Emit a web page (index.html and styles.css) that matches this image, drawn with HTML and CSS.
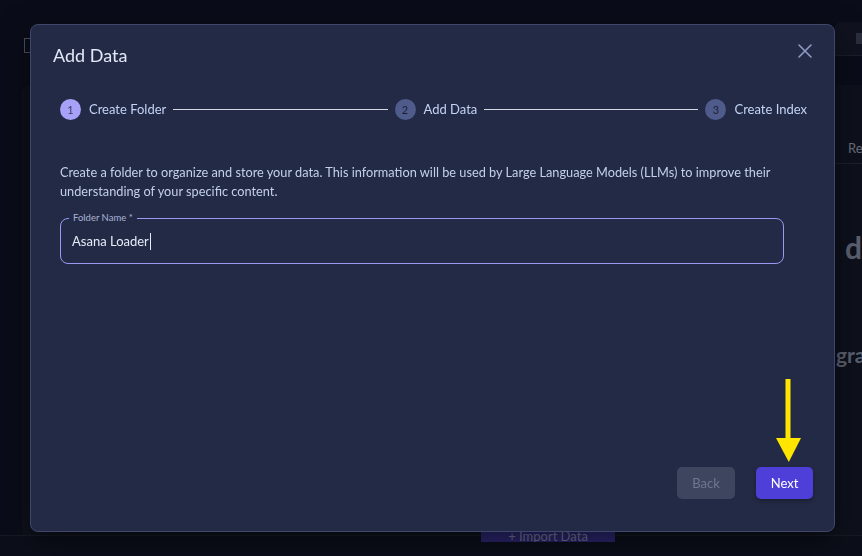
FILE: index.html
```html
<!DOCTYPE html>
<html lang="en">
<head>
    <meta charset="UTF-8">
    <meta name="viewport" content="width=device-width, initial-scale=1.0">
    <title>Add Data</title>
    <link rel="stylesheet" href="styles.css">
</head>
<body>
    <!-- Página por trás do modal (escurecida) -->
    <div class="page">
        <header class="topbar">
            <span class="topbar-icon"></span>
            <div class="topbar-right"><span class="topbar-chip"></span></div>
        </header>
        <main class="content">
            <div class="content-main"></div>
            <aside class="content-side">
                <div class="side-tab">Re</div>
                <div class="side-heading">d</div>
                <div class="side-sub">gra</div>
            </aside>
        </main>
        <footer class="page-footer">
            <button class="import-btn">+ Import Data</button>
        </footer>
    </div>

    <!-- Modal "Add Data" -->
    <div class="backdrop">
        <div class="modal">
            <h2 class="modal-title">Add Data</h2>
            <button class="modal-close" aria-label="Close">
                <svg width="14" height="14" viewBox="0 0 14 14">
                    <path d="M1 1 L13 13 M13 1 L1 13" stroke="#8f9ac6" stroke-width="1.6" stroke-linecap="round"/>
                </svg>
            </button>

            <!-- Etapas -->
            <div class="stepper">
                <span class="step-num active">1</span>
                <span class="step-label">Create Folder</span>
                <span class="step-line"></span>
                <span class="step-num">2</span>
                <span class="step-label">Add Data</span>
                <span class="step-line"></span>
                <span class="step-num">3</span>
                <span class="step-label">Create Index</span>
            </div>

            <div class="modal-body">
                <p class="description">Create a folder to organize and store your data. This information will be used by Large Language Models (LLMs) to improve their understanding of your specific content.</p>

                <div class="field">
                    <span class="field-label">Folder Name *</span>
                    <div class="field-value">Asana Loader<span class="caret"></span></div>
                </div>
            </div>

            <div class="modal-actions">
                <button class="btn btn-back" disabled>Back</button>
                <button class="btn btn-next">Next</button>
            </div>

            <!-- Seta amarela de anotação -->
            <svg class="arrow" width="26" height="84" viewBox="0 0 26 84">
                <rect x="9.5" y="0" width="5" height="61" fill="#ffe500"/>
                <polygon points="0,59 25,59 12.8,83" fill="#ffe500"/>
            </svg>
        </div>
    </div>
</body>
</html>
```

FILE: styles.css
```css
/* Base */
body {
    margin: 0;
    font-family: Lato, "Noto Sans", sans-serif;
    background-color: #0a0d19;
    overflow: hidden;
}

/* Página de fundo */
.page {
    height: 556px;
    display: flex;
    flex-direction: column;
}

.topbar {
    height: 55px;
    display: flex;
    align-items: flex-start;
    justify-content: space-between;
}

.topbar-icon {
    width: 8px;
    height: 13px;
    margin: 38px 0 0 24px;
    border: 1px solid #4a4f60;
}

.topbar-right {
    width: 28px;
    height: 33px;
    margin-top: 22px;
    background: #10131f;
    border-top-left-radius: 8px;
    border-bottom: 1px solid #1a1e2c;
}

.topbar-chip {
    display: block;
    width: 6px;
    height: 11px;
    margin: 11px 0 0 22px;
    background: #2a2e3c;
}

.content {
    flex: 1;
    margin: 30px 0 0 22px;
    display: flex;
    background: #0e111c;
    border-top-left-radius: 8px;
}

.content-main {
    flex: 1;
}

.content-side {
    width: 27px;
    white-space: nowrap;
    color: #5c6172;
}

.side-tab {
    height: 79px;
    padding: 55px 0 0 13px;
    box-sizing: border-box;
    font-size: 13px;
    color: #6a6f80;
    border-bottom: 1px solid #1c2030;
}

.side-heading {
    margin: 66px 0 0 10px;
    font-size: 30px;
    font-weight: 700;
    line-height: 34px;
}

.side-sub {
    margin: 78px 0 0 1px;
    font-size: 21px;
    font-weight: 700;
}

.page-footer {
    height: 20px;
    display: flex;
    background: #0c0f1a;
    border-top: 1px solid #171a26;
}

.import-btn {
    width: 134px;
    height: 16px;
    margin: -10px 0 0 481px;
    border: none;
    background: #2a256c;
    color: #6f7390;
    font-family: inherit;
    font-size: 13px;
    line-height: 6px;
    padding-top: 4px;
    overflow: hidden;
}

/* Camada do modal */
.backdrop {
    position: fixed;
    inset: 0;
    padding: 24px 0 0 30px;
}

.modal {
    position: relative;
    width: 805px;
    height: 508px;
    box-sizing: border-box;
    background: #232a45;
    border: 1px solid #3f476b;
    border-radius: 8px;
    display: flex;
    flex-direction: column;
    box-shadow: 0 10px 30px rgba(0, 0, 0, 0.5);
}

.modal-title {
    margin: 0;
    padding: 18px 22px 0;
    font-size: 18px;
    line-height: 24px;
    font-weight: 400;
    color: #e2e8f7;
}

.modal-close {
    position: absolute;
    top: 19px;
    right: 22px;
    padding: 0;
    border: none;
    background: none;
    cursor: pointer;
}

/* Etapas */
.stepper {
    display: flex;
    align-items: center;
    margin: 31px 27px 0 29px;
    height: 22px;
}

.step-num {
    width: 21px;
    height: 21px;
    border-radius: 50%;
    background: #4f5b8b;
    color: #1b1f33;
    font-size: 11px;
    line-height: 21px;
    text-align: center;
    flex-shrink: 0;
}

.step-num.active {
    background: #a7a2f7;
    color: #3a3c66;
}

.step-label {
    margin-left: 8px;
    font-size: 13px;
    color: #c3d3f5;
    white-space: nowrap;
}

.step-line {
    flex: 1;
    height: 1px;
    margin: 0 7px;
    background: #d6d8e4;
}

/* Conteúdo */
.modal-body {
    padding: 0 50px 0 29px;
}

.description {
    margin: 43px 0 0;
    font-size: 12.75px;
    line-height: 19px;
    color: #c4d0ea;
}

.field {
    position: relative;
    margin-top: 17px;
    height: 46px;
    box-sizing: border-box;
    border: 1px solid #9c97f2;
    border-radius: 8px;
    display: flex;
    align-items: center;
}

.field-label {
    position: absolute;
    top: -7px;
    left: 8px;
    padding: 0 4px;
    background: #232a45;
    font-size: 9.5px;
    line-height: 12px;
    color: #aab2d6;
}

.field-value {
    padding-left: 11px;
    font-size: 13px;
    color: #e6ebf8;
    display: flex;
    align-items: center;
}

.caret {
    display: inline-block;
    width: 1px;
    height: 17px;
    margin-left: 1px;
    background: #e6ebf8;
}

/* Botões */
.modal-actions {
    margin-top: auto;
    display: flex;
    justify-content: flex-end;
    gap: 21px;
    padding: 0 21px 32px 0;
}

.btn {
    height: 32px;
    border: none;
    border-radius: 5px;
    font-family: inherit;
    font-size: 13px;
    cursor: pointer;
}

.btn-back {
    width: 58px;
    background: #3e455f;
    color: #6f7692;
}

.btn-next {
    width: 57px;
    background: #4f3fd9;
    color: #ffffff;
    box-shadow: 0 2px 4px rgba(0, 0, 0, 0.3);
}

.arrow {
    position: absolute;
    left: 745px;
    top: 354px;
}
```
